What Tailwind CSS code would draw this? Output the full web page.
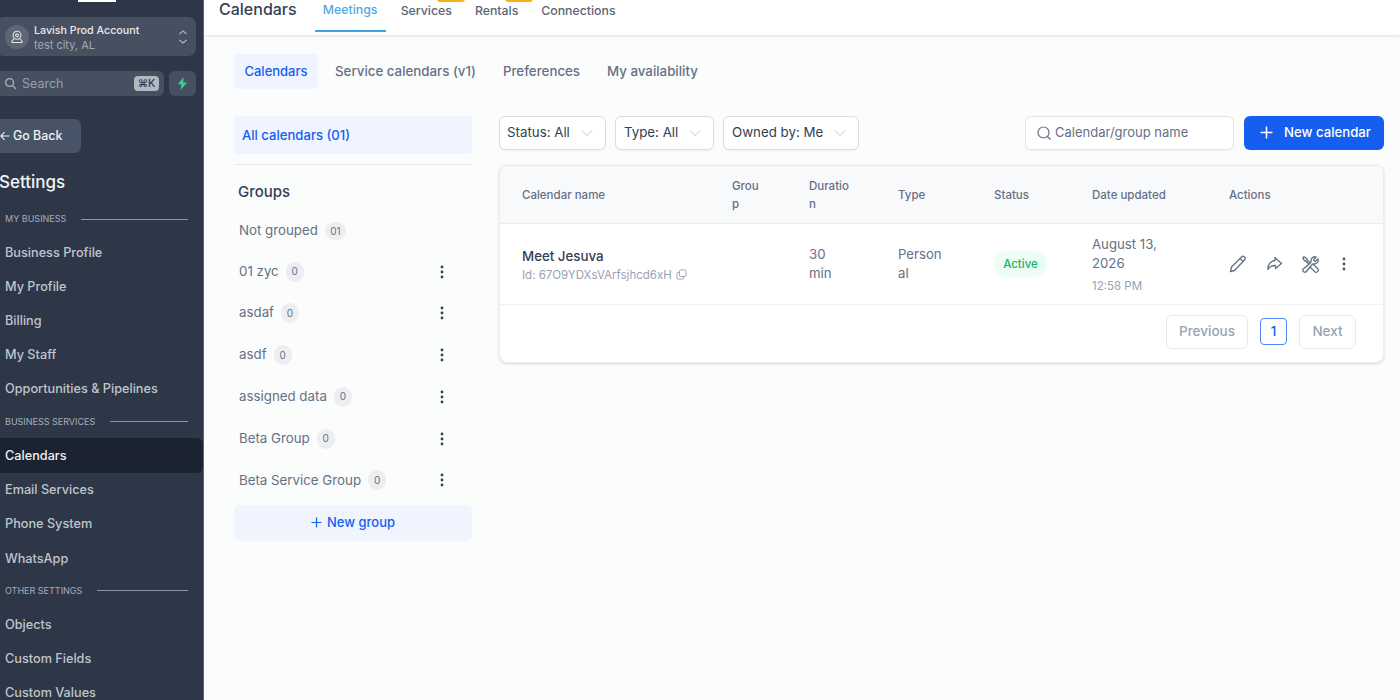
<!DOCTYPE html>
<html><head><meta charset="utf-8"><script src="https://cdn.jsdelivr.net/npm/@tailwindcss/browser@4"></script></head>
<body class="m-0 overflow-hidden bg-white">
<div class="flex h-[700px] w-[1400px] overflow-hidden font-['Inter',sans-serif]">
  <aside class="relative h-[700px] w-[204px] shrink-0 overflow-hidden border-r border-[#5b6472] bg-[#2d3748]">
    <div class="ml-[78px] h-[2px] w-[38px] bg-white"></div>
    <div class="-ml-1 mt-[15px] flex h-[39px] w-[200px] items-center rounded-lg bg-[#475060] pl-[9px] pr-[8px]">
      <div class="flex h-[24px] w-[24px] items-center justify-center rounded-full bg-[#5d6675]">
        <svg class="h-[14px] w-[14px]" viewBox="0 0 16 16" fill="none" stroke="#e5e7eb" stroke-width="1.2"><circle cx="8" cy="6" r="4.500"/><circle cx="8" cy="6" r="1.600"/><path d="M4.500 10 2.500 12.500a1 1 0 0 0 .8 1.800h9.400a1 1 0 0 0 .8-1.800L11.500 10"/></svg>
      </div>
      <div class="ml-[5px] flex-1 pt-[2px] leading-[14px]">
        <div class="text-[10.7px] font-medium text-[#e8eaee]">Lavish Prod Account</div>
        <div class="text-[11px] text-[#a3aab5]">test city, AL</div>
      </div>
      <svg class="h-[16px] w-[10px]" viewBox="0 0 10 16" fill="none" stroke="#aeb4be" stroke-width="1.1"><path d="M1.5 5 5 2l3.5 3M1.5 11 5 14l3.5-3"/></svg>
    </div>
    <div class="mt-[15px] flex h-[25px] gap-[5px]">
      <div class="-ml-1 flex w-[168px] items-center rounded-md bg-[#475060] pl-[8px] pr-[5px]">
        <svg class="h-[13px] w-[13px]" viewBox="0 0 14 14" fill="none" stroke="#aeb4be" stroke-width="1.4"><circle cx="6" cy="6" r="4.2"/><path d="m9.2 9.2 3.6 3.6"/></svg>
        <span class="ml-[5px] flex-1 pt-[1px] text-[12.500px] text-[#98a0ac]">Search</span>
        <span class="flex h-[15px] w-[25px] items-center justify-center rounded-sm bg-[#b3b8c0] text-[10.5px] font-medium text-[#2d3748]">⌘K</span>
      </div>
      <div class="flex w-[27px] items-center justify-center rounded-md bg-[#475060]">
        <svg class="h-[13px] w-[11px]" viewBox="0 0 11 13" fill="#34d399"><path d="M6.5 0 1 7.2h3.4L3.6 13 10 5.6H6.2z"/></svg>
      </div>
    </div>
    <div class="-ml-1 mt-[23px] flex h-[34px] w-[85px] items-center rounded-md bg-[#475467] pl-[4px] text-[12.400px] font-medium text-[#f0f1f3]">
      <svg class="h-[10px] w-[10px]" viewBox="0 0 10 10" fill="none" stroke="#f0f1f3" stroke-width="1.1"><path d="M9.5 5H.8M4.5 1.2.8 5l3.7 3.8"/></svg>
      <span class="ml-[3px]">Go Back</span>
    </div>
    <div class="-ml-[1px] mt-[17px] h-[24px] text-[17px] font-medium leading-[24px] text-[#f3f4f6]">Settings</div>
    <div class="mt-[19px] flex h-[12px] items-center pl-[5px] pr-[15px] text-[9px] uppercase leading-[12px] text-[#a7adb8]"><span>My Business</span><span class="ml-[15px] h-px flex-1 bg-[#8d95a2]"></span></div>
    <nav class="mt-[10px] text-[12.700px] font-medium text-[#c0c5cd]">
      <div class="flex h-[34.2px] items-center pl-[5px]">Business Profile</div>
      <div class="flex h-[34.2px] items-center pl-[5px]">My Profile</div>
      <div class="flex h-[34.2px] items-center pl-[5px]">Billing</div>
      <div class="flex h-[34.2px] items-center pl-[5px]">My Staff</div>
      <div class="flex h-[34.2px] items-center pl-[5px]">Opportunities &amp; Pipelines</div>
    </nav>
    <div class="mt-[10px] flex h-[12px] items-center pl-[5px] pr-[15px] text-[9px] uppercase leading-[12px] text-[#a7adb8]"><span>Business Services</span><span class="ml-[15px] h-px flex-1 bg-[#8d95a2]"></span></div>
    <nav class="mt-[10.500px] text-[12.700px] font-medium text-[#c0c5cd]">
      <div class="flex h-[34.2px] items-center rounded-r-md bg-[#1c2330] pl-[5px] text-[#eef0f2]">Calendars</div>
      <div class="flex h-[34.2px] items-center pl-[5px]">Email Services</div>
      <div class="flex h-[34.2px] items-center pl-[5px]">Phone System</div>
      <div class="flex h-[34.2px] items-center pl-[5px]">WhatsApp</div>
    </nav>
    <div class="mt-[9.5px] flex h-[12px] items-center pl-[5px] pr-[15px] text-[9px] uppercase leading-[12px] text-[#a7adb8]"><span>Other Settings</span><span class="ml-[15px] h-px flex-1 bg-[#8d95a2]"></span></div>
    <nav class="mt-[10.500px] text-[12.700px] font-medium text-[#c0c5cd]">
      <div class="flex h-[34.2px] items-center pl-[5px]">Objects</div>
      <div class="flex h-[34.2px] items-center pl-[5px]">Custom Fields</div>
      <div class="flex h-[34.2px] items-center pl-[5px]">Custom Values</div>
    </nav>
  </aside>
  <div class="flex min-w-0 flex-1 flex-col bg-[#fbfdfd]">
    <header class="flex h-[35px] shrink-0 bg-white pl-[15px] shadow-[0_1px_3px_rgba(0,0,0,0.12)]">
      <div class="-mt-[1px] h-[20px] text-[16px] font-medium leading-[20px] text-[#344054]">Calendars</div>
      <div class="ml-[18px] flex h-[32px] w-[71px] justify-center border-b-2 border-[#3ba5e3] pt-[2px] text-[12.300px] font-medium leading-[16px] text-[#4fa9e3]">Meetings</div>
      <div class="relative ml-[15px] pt-[3px] text-[12.300px] font-medium leading-[16px] text-[#5c6675]">Services<span class="absolute left-[36px] -top-[1px] h-[3px] w-[28px] rounded-b-sm bg-[#f7b217]"></span></div>
      <div class="relative ml-[23px] pt-[3px] text-[12.300px] font-medium leading-[16px] text-[#5c6675]">Rentals<span class="absolute left-[30px] -top-[1px] h-[3px] w-[28px] rounded-b-sm bg-[#f7b217]"></span></div>
      <div class="ml-[23px] pt-[3px] text-[12.300px] font-medium leading-[16px] text-[#5c6675]">Connections</div>
    </header>
    <div class="pl-[30px] pr-[16px] pt-[19px]">
      <div class="flex h-[35px] items-center text-[13.300px] font-medium text-[#667085]">
        <div class="flex h-[35px] w-[84px] items-center justify-center rounded bg-[#eff4ff] text-[13px] text-[#155eef]">Calendars</div>
        <div class="ml-[17px]">Service calendars (v1)</div>
        <div class="ml-[27px]">Preferences</div>
        <div class="ml-[27px]">My availability</div>
      </div>
      <div class="mt-[27px] flex">
        <div class="w-[238px] shrink-0">
          <div class="flex h-[38px] items-center rounded bg-[#eff4ff] pl-[8px] pt-[1px] text-[13.100px] font-medium text-[#155eef]">All calendars (01)</div>
          <div class="mt-[10px] h-px bg-[#e5e7eb]"></div>
          <div class="mt-[17px] pl-[4px] text-[15px] font-medium leading-[20px] text-[#344054]">Groups</div>
          <div class="mt-[19px] flex h-[20px] items-center pl-[5px] text-[13.300px] text-[#667085]">Not grouped<span class="ml-[7px] flex h-[18px] w-[21px] items-center justify-center rounded-full bg-[#eceef2] text-[10px] text-[#667085]">01</span></div>
          <div class="mt-[20.5px] flex h-[20px] items-center pl-[5px] text-[13.300px] text-[#667085]">01 zyc<span class="ml-[7px] flex h-[20px] w-[18px] items-center justify-center rounded-full bg-[#eceef2] text-[10px]">0</span><svg class="ml-auto mr-[28px] h-[14px] w-[4px]" viewBox="0 0 4 14" fill="#344054"><circle cx="2" cy="2" r="1.4"/><circle cx="2" cy="7" r="1.4"/><circle cx="2" cy="12" r="1.4"/></svg></div>
          <div class="mt-[21.8px] flex h-[20px] items-center pl-[5px] text-[13.300px] text-[#667085]">asdaf<span class="ml-[7px] flex h-[20px] w-[18px] items-center justify-center rounded-full bg-[#eceef2] text-[10px]">0</span><svg class="ml-auto mr-[28px] h-[14px] w-[4px]" viewBox="0 0 4 14" fill="#344054"><circle cx="2" cy="2" r="1.4"/><circle cx="2" cy="7" r="1.4"/><circle cx="2" cy="12" r="1.4"/></svg></div>
          <div class="mt-[21.8px] flex h-[20px] items-center pl-[5px] text-[13.300px] text-[#667085]">asdf<span class="ml-[7px] flex h-[20px] w-[18px] items-center justify-center rounded-full bg-[#eceef2] text-[10px]">0</span><svg class="ml-auto mr-[28px] h-[14px] w-[4px]" viewBox="0 0 4 14" fill="#344054"><circle cx="2" cy="2" r="1.4"/><circle cx="2" cy="7" r="1.4"/><circle cx="2" cy="12" r="1.4"/></svg></div>
          <div class="mt-[21.8px] flex h-[20px] items-center pl-[5px] text-[13.300px] text-[#667085]">assigned data<span class="ml-[7px] flex h-[20px] w-[18px] items-center justify-center rounded-full bg-[#eceef2] text-[10px]">0</span><svg class="ml-auto mr-[28px] h-[14px] w-[4px]" viewBox="0 0 4 14" fill="#344054"><circle cx="2" cy="2" r="1.4"/><circle cx="2" cy="7" r="1.4"/><circle cx="2" cy="12" r="1.4"/></svg></div>
          <div class="mt-[21.8px] flex h-[20px] items-center pl-[5px] text-[13.300px] text-[#667085]">Beta Group<span class="ml-[7px] flex h-[20px] w-[18px] items-center justify-center rounded-full bg-[#eceef2] text-[10px]">0</span><svg class="ml-auto mr-[28px] h-[14px] w-[4px]" viewBox="0 0 4 14" fill="#344054"><circle cx="2" cy="2" r="1.4"/><circle cx="2" cy="7" r="1.4"/><circle cx="2" cy="12" r="1.4"/></svg></div>
          <div class="mt-[21.8px] flex h-[20px] items-center pl-[5px] text-[13.300px] text-[#667085]">Beta Service Group<span class="ml-[7px] flex h-[20px] w-[18px] items-center justify-center rounded-full bg-[#eceef2] text-[10px]">0</span><svg class="ml-auto mr-[28px] h-[14px] w-[4px]" viewBox="0 0 4 14" fill="#344054"><circle cx="2" cy="2" r="1.4"/><circle cx="2" cy="7" r="1.4"/><circle cx="2" cy="12" r="1.4"/></svg></div>
          <div class="mt-[14.500px] flex h-[36px] items-center justify-center rounded-md bg-[#eff4ff] text-[13px] font-medium text-[#155eef]">
            <svg class="mr-[5px] h-[11px] w-[11px]" viewBox="0 0 11 11" fill="none" stroke="#155eef" stroke-width="1.2"><path d="M5.5.5v10M.5 5.5h10"/></svg>New group
          </div>
        </div>
        <div class="ml-[27px] min-w-0 flex-1">
          <div class="flex h-[34px] items-center">
            <div class="flex h-[34px] w-[107px] items-center justify-between rounded-md border border-[#d9dde3] bg-white pb-[1px] pl-[7px] pr-[12px] text-[13.300px] text-[#344054] shadow-[0_1px_1px_rgba(16,24,40,0.05)]">Status: All<svg class="h-[6px] w-[12px]" viewBox="0 0 12 6" fill="none" stroke="#c0c5cd" stroke-width="1"><path d="m1 .5 5 5 5-5"/></svg></div>
            <div class="ml-[9px] flex h-[34px] w-[99px] items-center justify-between rounded-md border border-[#d9dde3] bg-white pb-[1px] pl-[8px] pr-[12px] text-[13.300px] text-[#344054] shadow-[0_1px_1px_rgba(16,24,40,0.05)]">Type: All<svg class="h-[6px] w-[12px]" viewBox="0 0 12 6" fill="none" stroke="#c0c5cd" stroke-width="1"><path d="m1 .5 5 5 5-5"/></svg></div>
            <div class="ml-[9px] flex h-[34px] w-[136px] items-center justify-between rounded-md border border-[#d9dde3] bg-white pb-[1px] pl-[8px] pr-[12px] text-[13.300px] text-[#344054] shadow-[0_1px_1px_rgba(16,24,40,0.05)]">Owned by: Me<svg class="h-[6px] w-[12px]" viewBox="0 0 12 6" fill="none" stroke="#c0c5cd" stroke-width="1"><path d="m1 .5 5 5 5-5"/></svg></div>
            <div class="ml-auto flex h-[34px] w-[209px] items-center rounded-md border border-[#e1e4e9] bg-white pb-[1px] pl-[11px] text-[13px] text-[#667085] shadow-[0_1px_1px_rgba(16,24,40,0.05)]">
              <svg class="mr-[4px] h-[14px] w-[14px]" viewBox="0 0 14 14" fill="none" stroke="#667085" stroke-width="1.2"><circle cx="6.5" cy="6.5" r="5.5"/><path d="m10.5 10.5 3 3"/></svg>Calendar/group name
            </div>
            <div class="ml-[10px] flex h-[34px] w-[140px] items-center rounded-md bg-[#155eef] pb-[1px] pl-[16px] text-[13.200px] font-medium text-white">
              <svg class="mr-[11px] h-[13px] w-[13px]" viewBox="0 0 13 13" fill="none" stroke="#fff" stroke-width="1.5"><path d="M6.5.5v12M.5 6.5h12"/></svg>New calendar
            </div>
          </div>
          <div class="mt-[15px] overflow-hidden rounded-lg border border-[#eaecf0] bg-white shadow-[0_1px_3px_rgba(16,24,40,0.16)]">
            <div class="flex h-[58px] items-center border-b border-[#eaecf0] bg-[#f8f9fb] text-[11.5px] font-medium leading-[18px] text-[#667085]">
              <div class="ml-[22px] w-[210px]">Calendar name</div>
              <div class="w-[77px]">Grou<br>p</div>
              <div class="w-[89px]">Duratio<br>n</div>
              <div class="w-[96px]">Type</div>
              <div class="w-[98px]">Status</div>
              <div class="w-[137px]">Date updated</div>
              <div>Actions</div>
            </div>
            <div class="flex h-[81px] items-center border-b border-[#f0f1f4] text-[13.200px] leading-[19px] text-[#667085]">
              <div class="ml-[22px] w-[210px]">
                <div class="text-[13.300px] font-medium leading-[20px] text-[#344054]">Meet Jesuva</div>
                <div class="flex items-center pt-[1px] text-[11.500px] leading-[16px] text-[#98a2b3]">Id: 67O9YDXsVArfsjhcd6xH<svg class="ml-[4px] h-[11px] w-[11px]" viewBox="0 0 11 11" fill="none" stroke="#98a2b3" stroke-width="0.9"><rect x="3.5" y="1" width="6.5" height="6.5" rx="1"/><path d="M3.5 3.5H1.8a.8.8 0 0 0-.8.8v5a.8.8 0 0 0 .8.8h5a.8.8 0 0 0 .8-.8V7.5"/></svg></div>
              </div>
              <div class="w-[77px]"></div>
              <div class="w-[89px]">30<br>min</div>
              <div class="w-[96px]">Person<br>al</div>
              <div class="w-[98px]"><span class="flex h-[26px] w-[53px] items-center justify-center rounded-full bg-[#ecfdf3] text-[11.5px] font-medium text-[#17b26a]">Active</span></div>
              <div class="w-[137px]">August 13,<br>2026<div class="mt-[5px] text-[11.5px] leading-[16px] text-[#98a2b3]">12:58 PM</div></div>
              <div class="flex items-center">
                <svg class="h-[18px] w-[18px]" viewBox="0 0 18 18" fill="none" stroke="#667085" stroke-width="1.3" stroke-linejoin="round"><path d="M1.5 16.5 2.5 12 12.5 2a2 2 0 0 1 3 3l-10 10.5z"/><path d="M11 3.5l3 3"/></svg>
                <svg class="ml-[18px] h-[18px] w-[18px]" viewBox="0 0 18 18" fill="none" stroke="#667085" stroke-width="1.3" stroke-linejoin="round"><path d="M10 2.500 16.500 8.500 10.500 13.500V10.500C7 10.300 4.500 11.500 3 14.500 2.500 10 5.500 6 10 5.500z"/></svg>
                <svg class="ml-[18px] h-[19px] w-[19px]" viewBox="0 0 24 24" fill="none" stroke="#667085" stroke-width="1.700" stroke-linecap="round" stroke-linejoin="round"><path d="M11.42 15.17 17.25 21A2.652 2.652 0 0 0 21 17.25l-5.877-5.877M11.42 15.17l2.496-3.03c.317-.384.74-.626 1.208-.766M11.42 15.17l-4.655 5.653a2.548 2.548 0 1 1-3.586-3.586l6.837-5.63m5.108-.233c.55-.164 1.163-.188 1.743-.14a4.5 4.5 0 0 0 4.486-6.336l-3.276 3.277a3.004 3.004 0 0 1-2.25-2.25l3.276-3.276a4.5 4.5 0 0 0-6.336 4.486c.091 1.076-.071 2.264-.904 2.95l-.102.085m-1.745 1.437L5.909 7.5H4.5L2.25 3.75l1.5-1.5L7.5 4.5v1.409l4.26 4.26m-1.745 1.437 1.745-1.437"/></svg>
                <svg class="ml-[22px] h-[14px] w-[4px]" viewBox="0 0 4 14" fill="#475467"><circle cx="2" cy="2" r="1.4"/><circle cx="2" cy="7" r="1.4"/><circle cx="2" cy="12" r="1.4"/></svg>
              </div>
            </div>
            <div class="flex h-[57px] items-center justify-end pb-[4px] pr-[27px] text-[13.5px] font-medium text-[#98a2b3]">
              <div class="flex h-[34px] w-[82px] items-center justify-center rounded-md border border-[#e8eaee]">Previous</div>
              <div class="ml-[12px] flex h-[27px] w-[27px] items-center justify-center rounded border border-[#4f86f5] text-[#155eef]">1</div>
              <div class="ml-[12px] flex h-[34px] w-[57px] items-center justify-center rounded-md border border-[#e8eaee]">Next</div>
            </div>
          </div>
        </div>
      </div>
    </div>
  </div>
</div>
</body></html>
